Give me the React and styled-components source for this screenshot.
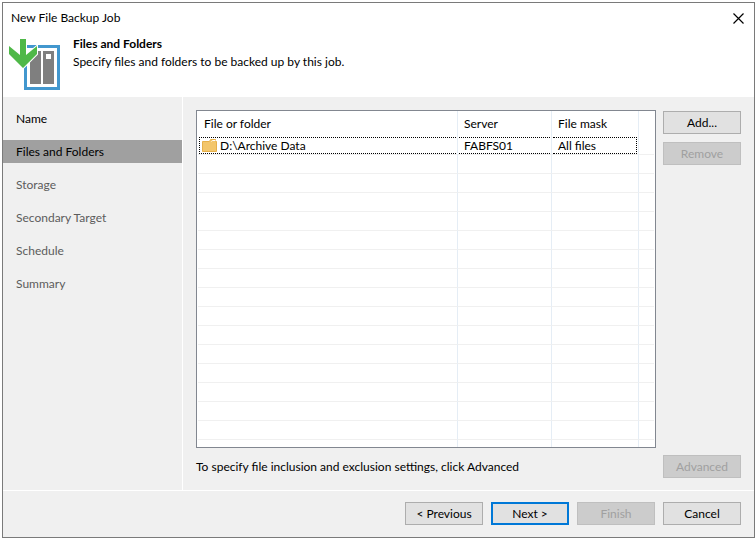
import { useState } from "react";
import styled, { createGlobalStyle } from "styled-components";

const GlobalStyle = createGlobalStyle`
  * {
    box-sizing: border-box;
  }
  body {
    margin: 0;
    background: #ffffff;
    color: #000000;
    font-family: Lato, "Open Sans", sans-serif;
    font-size: 12px;
    line-height: 18px;
  }
`;

const Page = styled.div`
  display: flex;
  min-height: 100vh;
  padding: 2px 1px 2px 2px;
`;

const Window = styled.div`
  flex: 1;
  display: flex;
  flex-direction: column;
  border: 1px solid #7a7a7a;
  background: #f0f0f0;
`;

const TitleBar = styled.div`
  display: flex;
  align-items: center;
  justify-content: space-between;
  height: 30px;
  padding: 0 8px;
  background: #ffffff;
`;

const CloseButton = styled.button`
  display: flex;
  align-items: center;
  justify-content: center;
  width: 16px;
  height: 16px;
  padding: 0;
  border: none;
  background: none;
`;

const Header = styled.header`
  display: flex;
  gap: 12px;
  height: 64px;
  padding: 2px 6px;
  background: #ffffff;
`;

const Heading = styled.h1`
  margin: 0;
  font-size: 12px;
  font-weight: 700;
`;

const Text = styled.p`
  margin: 0;
`;

const Note = styled(Text)`
  line-height: 23px;
`;

const Main = styled.div`
  flex: 1;
  display: flex;
`;

const Steps = styled.nav`
  display: flex;
  flex-direction: column;
  gap: 10px;
  width: 180px;
  padding-top: 10px;
  border-right: 1px solid #ffffff;
`;

const Step = styled.a`
  height: 23px;
  padding-left: 13px;
  line-height: 23px;
  text-decoration: none;
  color: ${(props) => (props.$pending ? "#5c5c5c" : "#000000")};
  background: ${(props) => (props.$active ? "#a0a0a0" : "transparent")};
`;

const Content = styled.main`
  flex: 1;
  display: grid;
  grid-template-columns: 1fr 78px;
  grid-template-rows: 1fr 23px;
  gap: 7px;
  padding: 13px 13px 12px 13px;
`;

const ListBox = styled.div`
  padding: 0 1px;
  border: 1px solid #828790;
  background: #ffffff;
`;

// the last row takes the height that the 19px rows leave over
const Table = styled.table`
  width: 100%;
  height: 100%;
  table-layout: fixed;
  border-collapse: separate;
  border-spacing: 0;
`;

const HeadCell = styled.th`
  width: ${(props) => props.$width || "auto"};
  height: 25px;
  padding: 0 6px;
  border-right: 1px solid #e5edf5;
  font-weight: 400;
  text-align: left;
  &:last-child {
    border-right: none;
  }
`;

const Cell = styled.td`
  height: ${(props) => (props.$filler ? "auto" : "19px")};
  padding: 0;
  border-right: 1px solid #e5edf5;
  border-bottom: ${(props) => (props.$filler ? "none" : "1px solid #f0f0f0")};
  &:last-child {
    border-right: none;
  }
`;

const Selected = styled.div`
  display: flex;
  align-items: center;
  gap: 3px;
  height: 17px;
  margin: 0 1px;
  padding-left: ${(props) => (props.$first ? "2px" : "5px")};
  border: 1px dotted #000000;
  border-left-width: ${(props) => (props.$first ? "1px" : "0")};
  border-right-width: ${(props) => (props.$last ? "1px" : "0")};
  line-height: 15px;
`;

const SideButtons = styled.div`
  display: flex;
  flex-direction: column;
  gap: 8px;
  padding-top: 1px;
`;

const Button = styled.button`
  width: 78px;
  height: 23px;
  padding: 0;
  border: ${(props) => (props.$primary ? "2px solid #0078d7" : "1px solid #adadad")};
  background: #e1e1e1;
  color: #000000;
  font-family: inherit;
  font-size: 12px;
  line-height: 18px;
  &:disabled {
    border-color: #bfbfbf;
    background: #cccccc;
    color: #a0a0a0;
  }
`;

const Footer = styled.footer`
  display: flex;
  justify-content: flex-end;
  gap: 8px;
  padding: 11px 13px 12px;
  border-top: 1px solid #ffffff;
`;

const steps = ["Name", "Files and Folders", "Storage", "Secondary Target", "Schedule", "Summary"];
const emptyRows = Array.from({ length: 15 }, (_, i) => i);

function JobIcon() {
  return (
    <svg width="52" height="55" viewBox="0 0 52 55" aria-hidden="true">
      <rect x="16.5" y="11.5" width="33" height="42" fill="#ffffff" stroke="#4297ce" strokeWidth="3" />
      <path d="M21 16h11v33H21zM34 16h11v33H34z" fill="#7f7f7f" />
      <path d="M37 19h5v5h-5z" fill="#ffffff" />
      <path
        d="M11 4h6v16l11-9v8L14 33 0 19v-8l11 9z"
        fill="#4fb848"
        stroke="#ffffff"
        strokeWidth="2"
        paintOrder="stroke"
      />
    </svg>
  );
}

function FolderIcon() {
  return (
    <svg width="15" height="13" viewBox="0 0 15 13" aria-hidden="true">
      <path d="M0.5 2.5h7l1-2h5v2h1v10h-14z" fill="#f3c66b" stroke="#e6b04a" />
      <path d="M9.5 2.5l1-1h3" fill="none" stroke="#ffffff" />
    </svg>
  );
}

function App() {
  const [active, setActive] = useState(1);

  return (
    <Page>
      <GlobalStyle />
      <Window>
        <TitleBar>
          <span>New File Backup Job</span>
          <CloseButton aria-label="Close">
            <svg width="11" height="11" viewBox="0 0 11 11">
              <path d="M0.5 0.5l10 10M10.5 0.5l-10 10" stroke="#000000" strokeWidth="1.2" />
            </svg>
          </CloseButton>
        </TitleBar>
        <Header>
          <JobIcon />
          <div>
            <Heading>Files and Folders</Heading>
            <Text>Specify files and folders to be backed up by this job.</Text>
          </div>
        </Header>
        <Main>
          <Steps>
            {steps.map((step, i) => (
              <Step
                key={step}
                href="#"
                $active={i === active}
                $pending={i > active}
                onClick={() => setActive(i)}
              >
                {step}
              </Step>
            ))}
          </Steps>
          <Content>
            <ListBox>
              <Table>
                <thead>
                  <tr>
                    <HeadCell>File or folder</HeadCell>
                    <HeadCell $width="94px">Server</HeadCell>
                    <HeadCell $width="87px">File mask</HeadCell>
                    <HeadCell $width="15px" />
                  </tr>
                </thead>
                <tbody>
                  <tr>
                    <Cell>
                      <Selected $first>
                        <FolderIcon />
                        D:\Archive Data
                      </Selected>
                    </Cell>
                    <Cell>
                      <Selected>FABFS01</Selected>
                    </Cell>
                    <Cell>
                      <Selected $last>All files</Selected>
                    </Cell>
                    <Cell />
                  </tr>
                  {emptyRows.map((row) => (
                    <tr key={row}>
                      <Cell />
                      <Cell />
                      <Cell />
                      <Cell />
                    </tr>
                  ))}
                  <tr>
                    <Cell $filler />
                    <Cell $filler />
                    <Cell $filler />
                    <Cell $filler />
                  </tr>
                </tbody>
              </Table>
            </ListBox>
            <SideButtons>
              <Button>Add...</Button>
              <Button disabled>Remove</Button>
            </SideButtons>
            <Note>To specify file inclusion and exclusion settings, click Advanced</Note>
            <Button disabled>Advanced</Button>
          </Content>
        </Main>
        <Footer>
          <Button>&lt; Previous</Button>
          <Button $primary>Next &gt;</Button>
          <Button disabled>Finish</Button>
          <Button>Cancel</Button>
        </Footer>
      </Window>
    </Page>
  );
}

export default App;
